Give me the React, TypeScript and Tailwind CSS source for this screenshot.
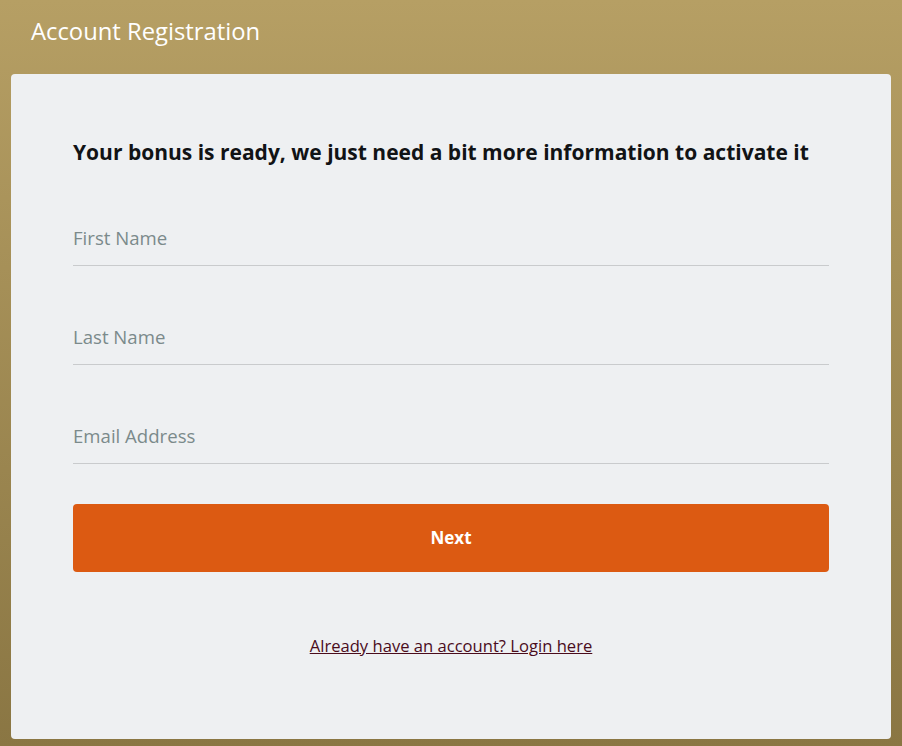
import React from 'react';

const fields = [
	{ name: 'firstName', placeholder: 'First Name', type: 'text' },
	{ name: 'lastName', placeholder: 'Last Name', type: 'text' },
	{ name: 'email', placeholder: 'Email Address', type: 'email' },
];

export default function App() {
	return (
		<div className="min-h-[746px] bg-gradient-to-b from-[#b69f64] to-[#8a7643] pb-[7px] font-['Open_Sans',sans-serif]">
			<header className="h-[74px] pl-[31px] pt-[15px]">
				<h1 className="text-[23.8px] leading-[32px] text-white">Account Registration</h1>
			</header>

			<main className="mx-[11px] h-[665px] rounded-[4px] bg-[#eef0f2] px-[62px] pt-[64px]">
				<h2 className="text-[21px] font-bold leading-[28px] text-[#111315]">
					Your bonus is ready, we just need a bit more information to activate it
				</h2>

				<form className="mt-[48px] flex flex-col gap-[47px]" onSubmit={(e) => e.preventDefault()}>
					{fields.map((field) => (
						<input
							key={field.name}
							name={field.name}
							type={field.type}
							placeholder={field.placeholder}
							className="h-[52px] w-full border-b border-[#c9cbcd] bg-transparent pb-[5px] text-[18.6px] text-[#333] outline-none placeholder:text-[#7b8a8b]"
						/>
					))}
				</form>

				<button className="mt-[40px] h-[68px] w-full rounded-[4px] bg-[#dc5a12] text-[17px] font-bold text-white">
					Next
				</button>

				<div className="mt-[62px] text-center">
					<a href="#" className="text-[16.6px] leading-[24px] text-[#4a0c1c] underline">
						Already have an account? Login here
					</a>
				</div>
			</main>
		</div>
	);
}
